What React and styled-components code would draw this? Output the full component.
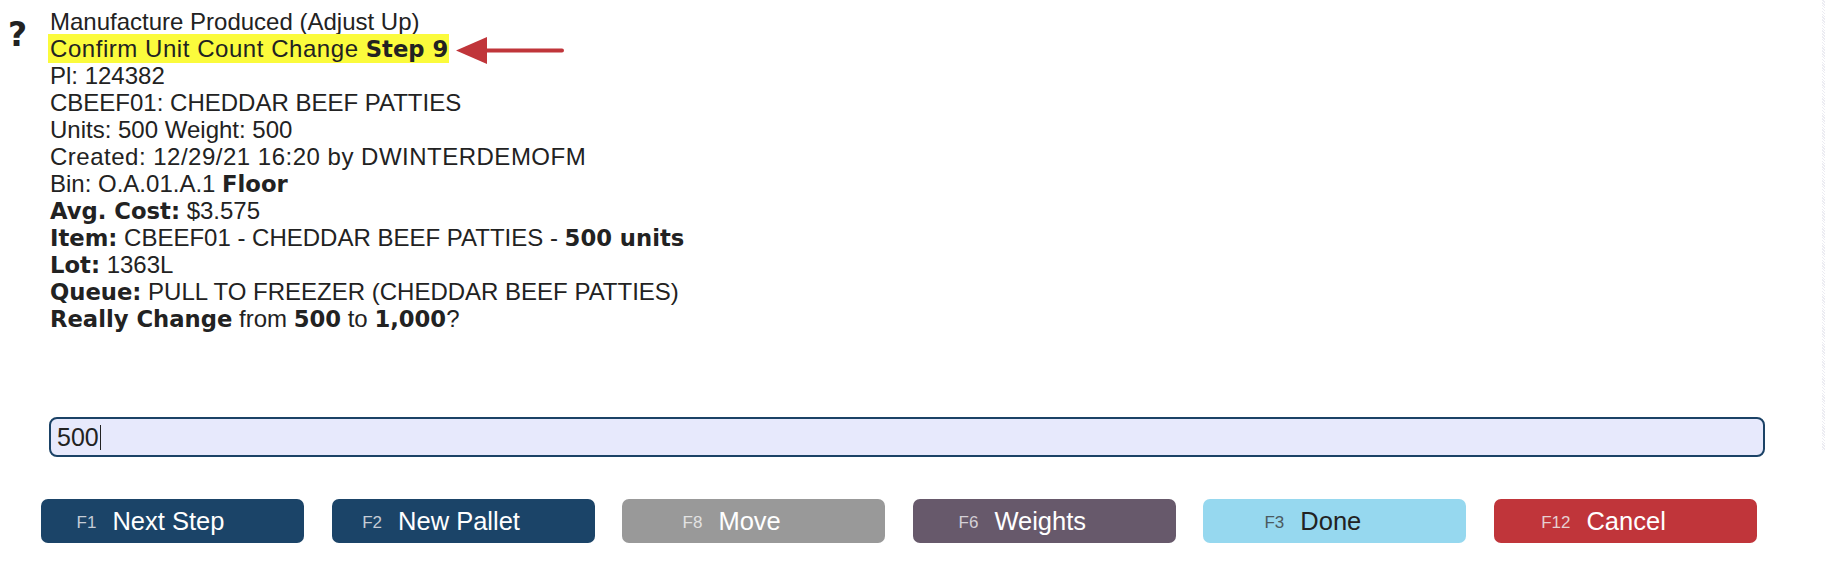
import React from "react";
import styled, { createGlobalStyle } from "styled-components";

const GlobalStyle = createGlobalStyle`
  html, body {
    margin: 0;
    padding: 0;
    background: #ffffff;
  }
  body {
    font-family: "Liberation Sans", Arial, sans-serif;
    color: #222222;
  }
`;

const Page = styled.div`
  position: relative;
  width: 1825px;
  height: 569px;
  overflow: hidden;
  display: flex;
  flex-direction: column;
`;

const EdgeStrip = styled.div`
  position: absolute;
  top: 0;
  right: 0;
  width: 3px;
  height: 450px;
  background-image: repeating-linear-gradient(
    45deg,
    #ececf2 0 1px,
    #ffffff 1px 2px
  );
`;

const Prompt = styled.div`
  display: flex;
  padding-top: 8px;
`;

const HelpMark = styled.div`
  width: 50px;
  padding-left: 8px;
  padding-top: 10px;
  box-sizing: border-box;
  font-family: "DejaVu Sans", sans-serif;
  font-size: 33px;
  font-weight: bold;
  line-height: 1;
  color: #222222;
`;

const Lines = styled.div`
  display: flex;
  flex-direction: column;
  font-size: 24px;
  line-height: 27px;
`;

const Line = styled.div`
  height: 27px;
  white-space: pre;
  letter-spacing: ${(p) => (p.$wide ? "0.5px" : "normal")};
`;

const Strong = styled.b`
  font-family: "DejaVu Sans", sans-serif;
  font-weight: bold;
  font-size: 22.7px;
  line-height: 1;
  letter-spacing: normal;
`;

const Highlight = styled.span`
  display: inline-block;
  background: #fbfb3c;
  padding: 1px 1px 1px 2px;
  margin: -1px 0 -1px -2px;
  letter-spacing: 0.55px;
`;

const Arrow = styled.svg`
  margin-left: 7px;
  vertical-align: middle;
`;

const Form = styled.div`
  display: flex;
  flex-direction: column;
  margin-top: 85px;
`;

const FieldWrap = styled.div`
  position: relative;
  margin-left: 49px;
  width: 1716px;
`;

const Field = styled.input`
  display: block;
  width: 100%;
  height: 40px;
  box-sizing: border-box;
  border: 2px solid #1b4266;
  border-radius: 8px;
  background: #e7e9fc;
  padding: 0 6px;
  font-family: "Liberation Sans", Arial, sans-serif;
  font-size: 25px;
  color: #222222;
  outline: none;
`;

const Caret = styled.span`
  position: absolute;
  left: 51px;
  top: 8px;
  width: 1px;
  height: 25px;
  background: #222222;
`;

const Actions = styled.div`
  display: grid;
  grid-template-columns: repeat(6, 263px);
  column-gap: 27.6px;
  margin-top: 42px;
  margin-left: 41px;
`;

const Action = styled.button`
  height: 44px;
  border: none;
  border-radius: 7px;
  background: ${(p) => p.$bg};
  color: ${(p) => p.$fg};
  display: flex;
  align-items: center;
  justify-content: center;
  padding: 0 44px 0 0;
  font-family: "Liberation Sans", Arial, sans-serif;
  font-size: 25.5px;
  cursor: pointer;
`;

const Key = styled.span`
  font-size: 17px;
  margin-right: 16px;
  color: ${(p) => p.$color};
  padding-top: 4px;
`;

const buttons = [
  { key: "F1", label: "Next Step", bg: "#1b4468", fg: "#ffffff", keyColor: "#c5ccd6" },
  { key: "F2", label: "New Pallet", bg: "#1b4468", fg: "#ffffff", keyColor: "#c5ccd6" },
  { key: "F8", label: "Move", bg: "#999999", fg: "#ffffff", keyColor: "#e2e2e2" },
  { key: "F6", label: "Weights", bg: "#67596b", fg: "#ffffff", keyColor: "#d4d0d6" },
  { key: "F3", label: "Done", bg: "#96d8ef", fg: "#222222", keyColor: "#4b5a60" },
  { key: "F12", label: "Cancel", bg: "#c0353a", fg: "#ffffff", keyColor: "#e6cfd0" },
];

const App = () => {
  return (
    <Page>
      <GlobalStyle />
      <Prompt>
        <HelpMark>?</HelpMark>
        <Lines>
          <Line>Manufacture Produced (Adjust Up)</Line>
          <Line>
            <Highlight>
              Confirm Unit Count Change <Strong>Step 9</Strong>
            </Highlight>
            <Arrow width="108" height="27" viewBox="0 0 108 27">
              <polygon points="0,13.5 31,0 31,27" fill="#c0353a" />
              <line
                x1="29"
                y1="13.5"
                x2="106"
                y2="13.5"
                stroke="#c0353a"
                strokeWidth="4"
                strokeLinecap="round"
              />
            </Arrow>
          </Line>
          <Line>Pl: 124382</Line>
          <Line>CBEEF01: CHEDDAR BEEF PATTIES</Line>
          <Line>Units: 500 Weight: 500</Line>
          <Line $wide>Created: 12/29/21 16:20 by DWINTERDEMOFM</Line>
          <Line>
            Bin: O.A.01.A.1 <Strong>Floor</Strong>
          </Line>
          <Line>
            <Strong>Avg. Cost:</Strong> $3.575
          </Line>
          <Line>
            <Strong>Item:</Strong> CBEEF01 - CHEDDAR BEEF PATTIES -{" "}
            <Strong>500 units</Strong>
          </Line>
          <Line>
            <Strong>Lot:</Strong> 1363L
          </Line>
          <Line>
            <Strong>Queue:</Strong> PULL TO FREEZER (CHEDDAR BEEF PATTIES)
          </Line>
          <Line>
            <Strong>Really Change</Strong> from <Strong>500</Strong> to{" "}
            <Strong>1,000</Strong>?
          </Line>
        </Lines>
      </Prompt>
      <Form>
        <FieldWrap>
          <Field defaultValue="500" />
          <Caret />
        </FieldWrap>
        <Actions>
          {buttons.map((b) => (
            <Action key={b.key} $bg={b.bg} $fg={b.fg}>
              <Key $color={b.keyColor}>{b.key}</Key>
              {b.label}
            </Action>
          ))}
        </Actions>
      </Form>
      <EdgeStrip />
    </Page>
  );
};

export default App;
